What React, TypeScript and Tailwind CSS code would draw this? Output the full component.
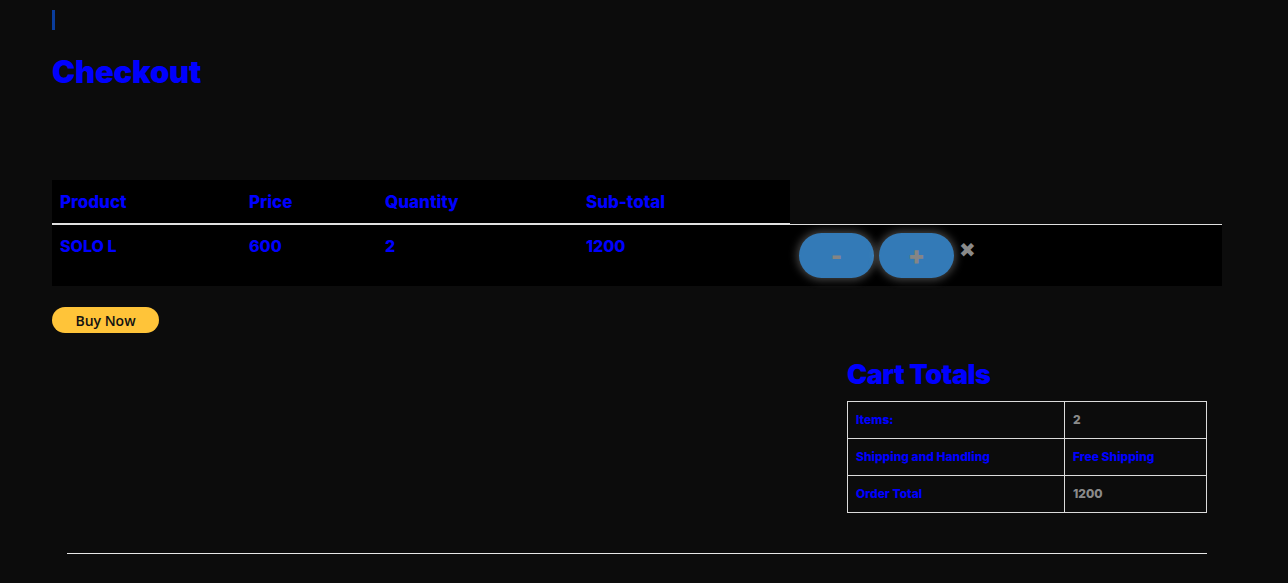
import React from "react";

const font = { fontFamily: 'Inter, "Liberation Sans", Arial, sans-serif' };

export default function App() {
  return (
    <div className="min-h-[583px] w-full bg-[#0c0c0c] font-extrabold text-[#0000ff]" style={font}>
      <div className="px-[52px] pt-[10px]">
        <div className="h-[20px] w-[3px] bg-[#0a3d9c]" />
        <h1 className="mt-[22px] text-[31px] leading-[40px] font-black tracking-[-0.2px]">Checkout</h1>
        <div className="mt-[88px] w-[1170px]">
          <div className="flex h-[45px] border-b border-[#e0e0e0]">
            <div className="flex w-[738px] items-center border-b border-[#e0e0e0] bg-black pt-[3px] text-[17px] tracking-[0px]">
              <div className="w-[189px] pl-[8px]">Product</div>
              <div className="w-[136px] pl-[8px]">Price</div>
              <div className="w-[201px] pl-[8px]">Quantity</div>
              <div className="w-[212px] pl-[8px]">Sub-total</div>
            </div>
          </div>
          <div className="flex h-[61px] bg-black text-[16px] tracking-[0px]">
            <div className="w-[189px] pl-[8px] pt-[9px]">SOLO L</div>
            <div className="w-[136px] pl-[8px] pt-[9px]">600</div>
            <div className="w-[201px] pl-[8px] pt-[9px]">2</div>
            <div className="w-[212px] pl-[8px] pt-[9px]">1200</div>
            <div className="flex items-start gap-[5px] pl-[9px] pt-[8px]">
              <button className="flex h-[45px] w-[75px] items-center justify-center rounded-full bg-[#337ab7] text-[24px] font-black text-[#858585] shadow-[0_0_8px_2px_rgba(200,200,200,0.35)]">
                -
              </button>
              <button className="flex h-[45px] w-[75px] items-center justify-center rounded-full bg-[#337ab7] text-[25px] font-black text-[#858585] shadow-[0_0_8px_2px_rgba(200,200,200,0.35)]">
                +
              </button>
              <span className="mt-[6px] text-[20px] leading-[22px] text-[#8a8a8a]" style={{ fontFamily: '"DejaVu Sans", sans-serif' }}>✖</span>
            </div>
          </div>
        </div>
        <button
          className="mt-[21px] flex h-[26px] w-[107px] items-center justify-center rounded-full bg-[#ffc439] text-[14px] font-semibold text-[#111]"
          style={{ fontFamily: '"Open Sans", "Noto Sans", sans-serif' }}
        >
          Buy Now
        </button>
        <div className="ml-[795px] mt-[25px] w-[360px]">
          <h2 className="text-[27px] leading-[34px] font-black tracking-[-0.5px]">Cart Totals</h2>
          <table className="mt-[9px] w-[360px] border-collapse text-[12px] tracking-[0px]">
            <tbody>
              <tr className="h-[37px]">
                <td className="w-[217px] border border-[#dcdcdc] pl-[8px]">Items:</td>
                <td className="border border-[#dcdcdc] pl-[8px] text-[12px] text-[#8a8a8a]">2</td>
              </tr>
              <tr className="h-[37px]">
                <td className="border border-[#dcdcdc] pl-[8px]">Shipping and Handling</td>
                <td className="border border-[#dcdcdc] pl-[8px]">Free Shipping</td>
              </tr>
              <tr className="h-[37px]">
                <td className="border border-[#dcdcdc] pl-[8px]">Order Total</td>
                <td className="border border-[#dcdcdc] pl-[8px] text-[12px] text-[#8a8a8a]">1200</td>
              </tr>
            </tbody>
          </table>
        </div>
      </div>
      <div className="mx-[67px] mt-[40px] w-[1140px] border-t border-[#e8e8e8]" />
    </div>
  );
}
